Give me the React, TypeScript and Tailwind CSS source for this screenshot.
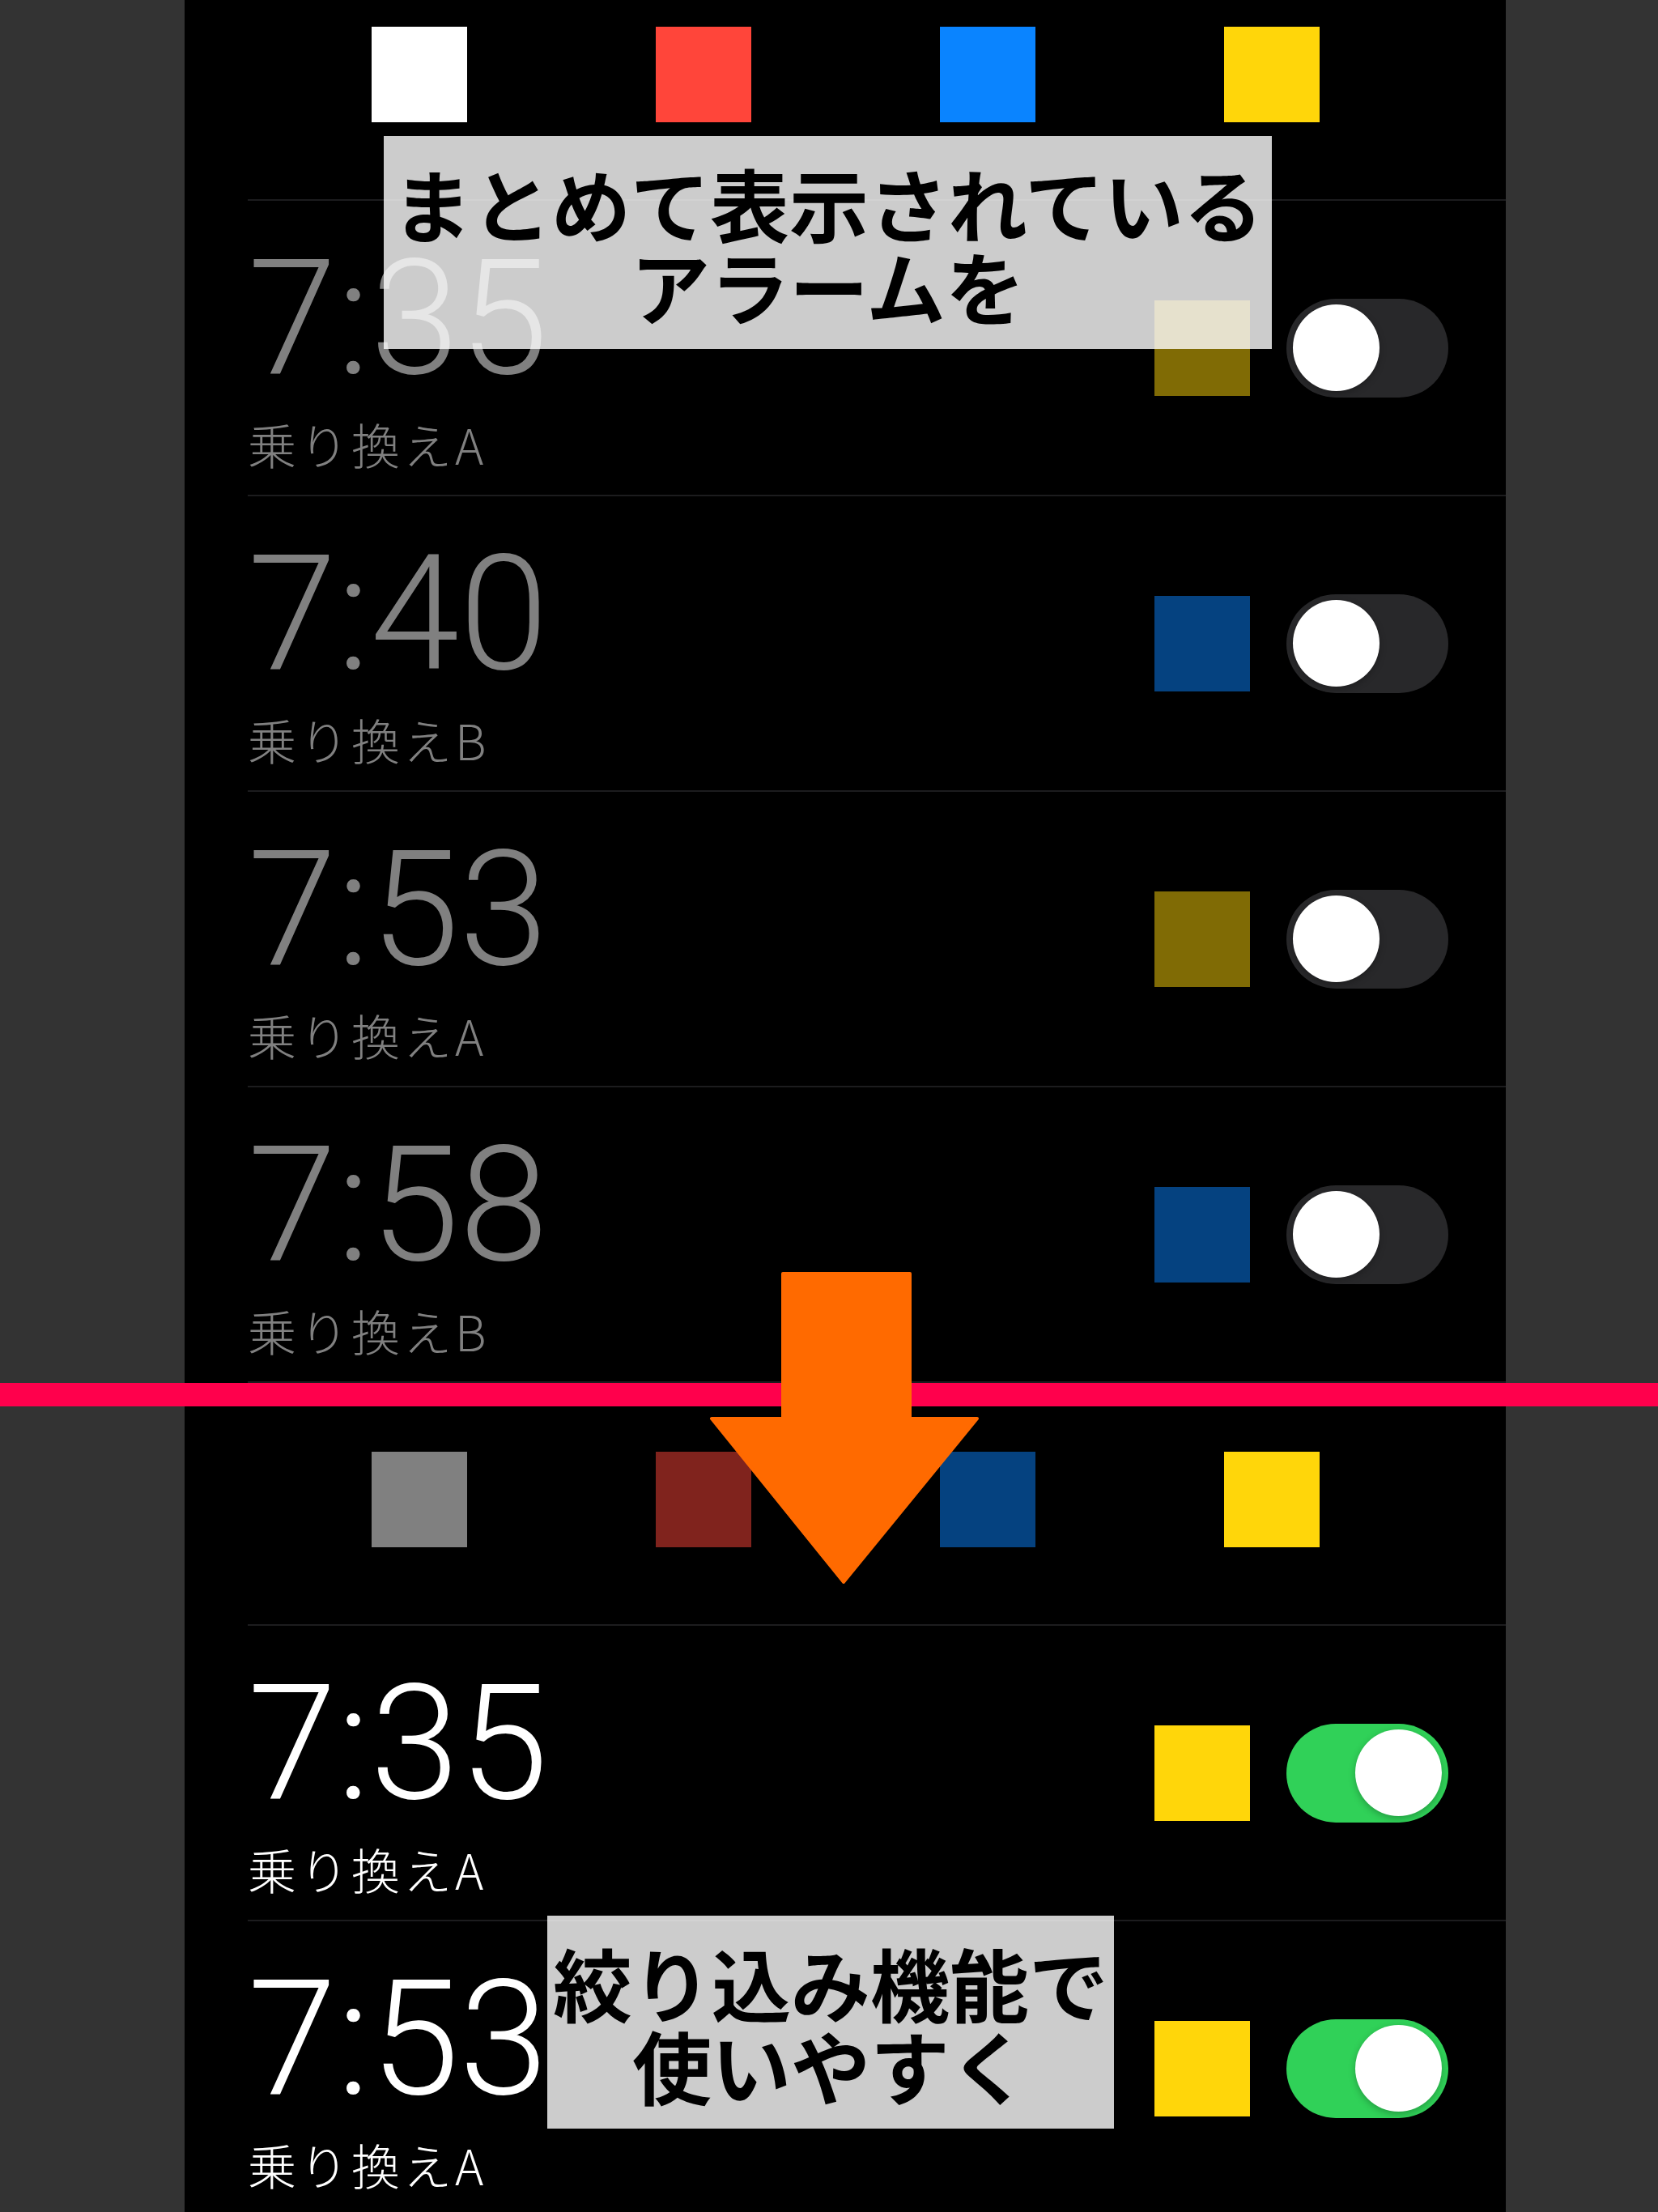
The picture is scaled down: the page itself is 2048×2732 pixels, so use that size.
import clsx from "clsx";

type Alarm = {
  time: string;
  label: string;
  color: string;
  on: boolean;
};

type Filter = {
  color: string;
  dim: boolean;
};

const timeFont = "[font-family:Roboto,'Liberation_Sans',sans-serif]";
const jpFont = "[font-family:'Noto_Sans_CJK_JP','Noto_Sans',sans-serif]";

const allFilters: Filter[] = [
  { color: "bg-white", dim: false },
  { color: "bg-[#ff453a]", dim: false },
  { color: "bg-[#0a84ff]", dim: false },
  { color: "bg-[#ffd60a]", dim: false },
];

const yellowOnly: Filter[] = [
  { color: "bg-white", dim: true },
  { color: "bg-[#ff453a]", dim: true },
  { color: "bg-[#0a84ff]", dim: true },
  { color: "bg-[#ffd60a]", dim: false },
];

const allAlarms: Alarm[] = [
  { time: "7:35", label: "乗り換えA", color: "bg-[#ffd60a]", on: false },
  { time: "7:40", label: "乗り換えB", color: "bg-[#0a84ff]", on: false },
  { time: "7:53", label: "乗り換えA", color: "bg-[#ffd60a]", on: false },
  { time: "7:58", label: "乗り換えB", color: "bg-[#0a84ff]", on: false },
];

const filteredAlarms: Alarm[] = [
  { time: "7:35", label: "乗り換えA", color: "bg-[#ffd60a]", on: true },
  { time: "7:53", label: "乗り換えA", color: "bg-[#ffd60a]", on: true },
];

function FilterBar({ filters, top }: { filters: Filter[]; top: string }) {
  return (
    <div className={clsx("flex flex-col", top)}>
      <div className="flex justify-center gap-[233px]">
        {filters.map((f, i) => (
          <div
            key={i}
            className={clsx("size-[118px]", f.color, f.dim && "opacity-50")}
          />
        ))}
      </div>
      <div className="ml-[78px] mt-[95px] border-b-2 border-[#1c1c1e]" />
    </div>
  );
}

function Toggle({ on }: { on: boolean }) {
  return (
    <div
      className={clsx(
        "flex h-[122px] w-[200px] shrink-0 items-center rounded-full px-[8px]",
        on ? "justify-end bg-[#30d158]" : "justify-start bg-[#28282a]",
      )}
    >
      <div className="size-[107px] rounded-full bg-white shadow-[0_3px_8px_rgba(0,0,0,0.25)]" />
    </div>
  );
}

function AlarmRow({ alarm }: { alarm: Alarm }) {
  return (
    <div className="ml-[78px] flex items-center border-b-2 border-[#1c1c1e] pr-[71px]">
      <div className="flex-1 pb-[33px] pt-[46px]">
        <div
          className={clsx(
            timeFont,
            "text-[198px] font-light leading-none",
            alarm.on ? "text-white" : "text-[#808080]",
          )}
        >
          {alarm.time}
        </div>
        <div
          className={clsx(
            jpFont,
            "mt-[26px] text-[60px] font-light leading-none tracking-[4px]",
            alarm.on ? "text-white" : "text-[#808080]",
          )}
        >
          {alarm.label}
        </div>
      </div>
      <div
        className={clsx(
          "mr-[45px] size-[118px] shrink-0",
          alarm.color,
          !alarm.on && "opacity-50",
        )}
      />
      <Toggle on={alarm.on} />
    </div>
  );
}

function Caption({ lines, className }: { lines: string[]; className: string }) {
  return (
    <div
      className={clsx(
        "absolute flex h-[263px] flex-col items-center justify-center bg-white/80 text-black",
        jpFont,
        className,
      )}
    >
      {lines.map((line) => (
        <div
          key={line}
          className="whitespace-nowrap text-[98px] font-bold leading-[102px]"
        >
          {line}
        </div>
      ))}
    </div>
  );
}

function DownArrow() {
  return (
    <svg
      className="absolute left-[876px] top-[1570px]"
      width="334"
      height="388"
      viewBox="0 0 334 388"
    >
      <path
        d="M91 3 H248 V182 H331 L166 384 L3 182 H91 Z"
        fill="#ff6a00"
        stroke="#ff6a00"
        strokeWidth="4"
        strokeLinejoin="round"
      />
    </svg>
  );
}

export default function App() {
  return (
    <div className="relative flex h-[2732px] flex-col overflow-hidden bg-[#333333]">
      <section className="ml-[228px] w-[1632px] bg-black">
        <FilterBar filters={allFilters} top="pt-[33px]" />
        {allAlarms.map((alarm, i) => (
          <AlarmRow key={i} alarm={alarm} />
        ))}
      </section>

      <div className="h-[29px] shrink-0 bg-[#ff004c]" />

      <section className="ml-[228px] w-[1632px] flex-1 bg-black">
        <FilterBar filters={yellowOnly} top="pt-[56px]" />
        {filteredAlarms.map((alarm, i) => (
          <AlarmRow key={i} alarm={alarm} />
        ))}
      </section>

      <DownArrow />

      <Caption
        lines={["まとめて表示されている", "アラームを"]}
        className="left-[474px] top-[168px] w-[1097px]"
      />
      <Caption
        lines={["絞り込み機能で", "使いやすく"]}
        className="left-[676px] top-[2366px] w-[700px]"
      />
    </div>
  );
}
